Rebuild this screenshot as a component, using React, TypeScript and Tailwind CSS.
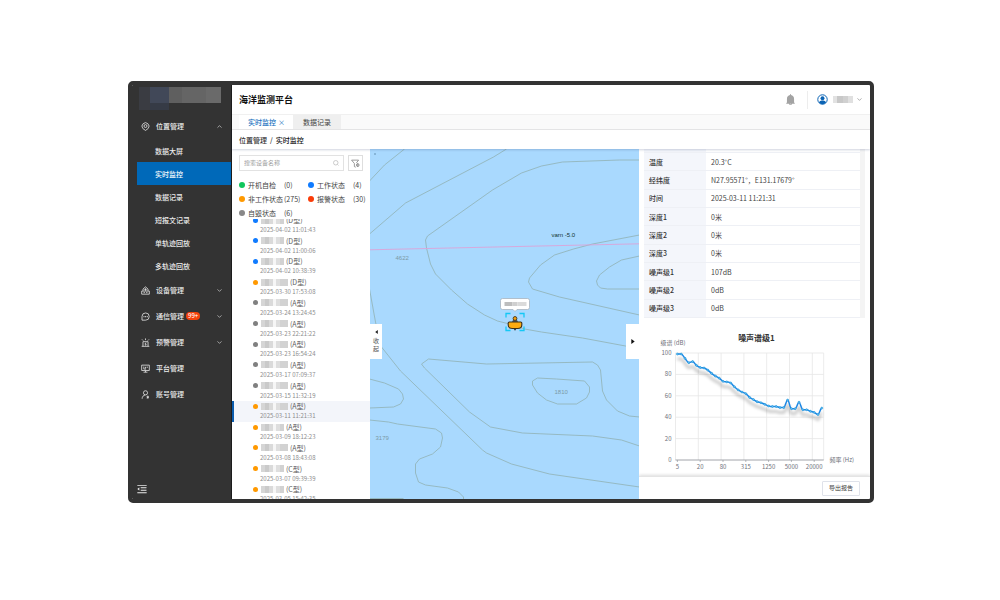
import React from "react";
import { AiFillBell, AiOutlineMenuFold } from "react-icons/ai";
import { ChevronDown, ChevronUp } from "lucide-react";

type IconName = "pin" | "device" | "message" | "alarm" | "monitor" | "account";

function NavIcon({ name }: { name: IconName }) {
  const shapes: Record<IconName, React.ReactNode> = {
    pin: (
      <>
        <path d="M8 15 3.200 11.500A6.200 6.200 0 1 1 12.800 11.500Z" />
        <circle cx="8" cy="7.200" r="2.600" />
      </>
    ),
    device: (
      <>
        <path d="M3.500 8.500V5.500L8 1.500l4.500 4v3" />
        <path d="M1.200 14.500V9h13.600v5.500Z" />
        <path d="M4.500 11.800h2.500M9 11.800h2.500M6 6.200h4M8 4v4.500" />
      </>
    ),
    message: (
      <>
        <path d="M1.800 14.500V8a6.400 6.400 0 1 1 6.400 6.500Z" />
        <path d="M4.500 8.200h1.600M7.400 8.200H9M10.300 8.200h1.600" strokeWidth="1.900" />
      </>
    ),
    alarm: (
      <>
        <path d="M1.200 14.800h13.600M3.500 14.800V6.500h9v8.300" />
        <path d="M8 .8v3M1.800 2.500l2 2M14.200 2.500l-2 2M8.800 8 7 11h2.200L8 13.500" />
      </>
    ),
    monitor: (
      <>
        <path d="M1.200 2h13.600v9.500H1.200ZM4.500 14.500h7M8 11.500v3" />
        <path d="M5 4.500v4.500h4M8 5v3M11 4.500V7" />
      </>
    ),
    account: (
      <>
        <circle cx="8" cy="5" r="3.700" />
        <path d="M2 15.500c0-3.800 2.500-6.300 5.500-6.500M12 10v5.500M10 11.500l4 2.500M14 11.500 10 14" />
      </>
    ),
  };
  return (
    <svg viewBox="0 0 16 16" className="h-[9px] w-[9px] shrink-0" fill="none" stroke="#dedede" strokeWidth="1.500">
      {shapes[name]}
    </svg>
  );
}

const subItems = ["数据大屏", "实时监控", "数据记录", "短报文记录", "单轨迹回放", "多轨迹回放"];

const groups: { label: string; icon: IconName; badge?: string; arrow?: boolean }[] = [
  { label: "设备管理", icon: "device", arrow: true },
  { label: "通信管理", icon: "message", badge: "99+", arrow: true },
  { label: "预警管理", icon: "alarm", arrow: true },
  { label: "平台管理", icon: "monitor" },
  { label: "账号管理", icon: "account" },
];

function Sidebar() {
  return (
    <aside className="flex w-[100px] shrink-0 flex-col border-r border-[#1c1c1c] bg-[#333333] text-[7px] leading-[10px] font-medium text-[#ececec]">
      <div className="mt-[2px] ml-[7px] flex h-[23px] w-[82px]">
        <div className="w-[11px] bg-[#3a3c42]" />
        <div className="w-[19px]">
          <div className="h-[16px] bg-[#414858]" />
          <div className="h-[7px] bg-[#363b46]" />
        </div>
        <div className="h-[16px] w-[13px] bg-[#5f5f5f]" />
        <div className="h-[16px] w-[24px] bg-[#656565]" />
        <div className="h-[16px] flex-1 bg-[#6a6a6a]" />
      </div>
      <nav className="mt-[3px] flex flex-col">
        <button className="flex h-[26px] items-center pr-[8px] pl-[9px]">
          <NavIcon name="pin" />
          <span className="ml-[6px]">位置管理</span>
          <ChevronUp className="ml-auto h-[7px] w-[7px]" strokeWidth={2} />
        </button>
        {subItems.map((s, i) => (
          <a
            key={s}
            href="#"
            className={
              i === 1
                ? "ml-[5px] flex h-[23px] items-center bg-[#0069b9] pl-[18px] text-white"
                : "ml-[5px] flex h-[23px] items-center pl-[18px]"
            }
          >
            {s}
          </a>
        ))}
        {groups.map((g) => (
          <button key={g.label} className="flex h-[26px] items-center pr-[8px] pl-[9px]">
            <NavIcon name={g.icon} />
            <span className="ml-[6px]">{g.label}</span>
            {g.badge && (
              <span className="ml-[2px] rounded-full bg-[#f5430b] px-[2px] text-[6px] leading-[8px] text-white">
                {g.badge}
              </span>
            )}
            {g.arrow && <ChevronDown className="ml-auto h-[7px] w-[7px]" strokeWidth={2} />}
          </button>
        ))}
      </nav>
      <button aria-label="收起菜单" className="mt-auto mb-[4px] ml-[4px] h-[12px] w-[12px]">
        <AiOutlineMenuFold className="h-[12px] w-[12px]" />
      </button>
    </aside>
  );
}

function Header() {
  return (
    <header className="flex h-[30px] shrink-0 items-center border-b border-[#f0f0f0] pr-[7px] pl-[7px]">
      <h1 className="text-[9px] leading-[12px] font-bold text-[#111111]">海洋监测平台</h1>
      <button aria-label="通知" className="ml-auto">
        <AiFillBell className="h-[13px] w-[13px] text-[#a3a3a3]" />
      </button>
      <div className="ml-[10px] h-[18px] w-px bg-[#ededed]" />
      <button aria-label="账户" className="ml-[9px] flex items-center">
        <svg viewBox="0 0 20 20" className="h-[11px] w-[11px]">
          <circle cx="10" cy="10" r="8.600" fill="#fff" stroke="#0a63b4" strokeWidth="1.800" />
          <circle cx="10" cy="7.800" r="3.600" fill="#0a63b4" />
          <path d="M3.500 15.500c1.200-3 3.500-3.800 6.500-3.800s5.300.8 6.500 3.800A8.600 8.600 0 0 1 3.500 15.500Z" fill="#0a63b4" />
        </svg>
        <span className="ml-[5px] flex h-[7px] w-[20px]">
          <span className="w-[4px] bg-[#e2e2e2]" />
          <span className="w-[6px] bg-[#c8c8c8]" />
          <span className="w-[5px] bg-[#d0d0d0]" />
          <span className="w-[5px] bg-[#e0e0e0]" />
        </span>
        <ChevronDown className="ml-[3px] h-[7px] w-[7px] text-[#777777]" strokeWidth={2} />
      </button>
    </header>
  );
}

function Tabs() {
  return (
    <div className="flex h-[15px] shrink-0 border-b border-[#e8e8e8] bg-[#fafafa] pl-[7px] text-[7px] leading-[14px]">
      <button className="flex items-center bg-white pr-[8px] pl-[9px] font-medium text-[#1470bd]">
        实时监控
        <span className="ml-[2px] font-normal">×</span>
      </button>
      <button className="bg-[#efefef] px-[10px] text-[#444444]">数据记录</button>
    </div>
  );
}

const statuses = [
  { name: "开机自检", count: "(0)", dot: "bg-[#10c65c]" },
  { name: "工作状态", count: "(4)", dot: "bg-[#0f7bff]" },
  { name: "非工作状态", count: "(275)", dot: "bg-[#ff9900]" },
  { name: "报警状态", count: "(30)", dot: "bg-[#fa3c08]" },
  { name: "自毁状态", count: "(6)", dot: "bg-[#888888]" },
];

const BLUE = "bg-[#0f7bff]";
const ORANGE = "bg-[#ff9900]";
const GRAY = "bg-[#808080]";

const devices = [
  { type: "(D型)", time: "2025-04-02 11:01:43", dot: BLUE, short: true },
  { type: "(D型)", time: "2025-04-02 11:00:06", dot: BLUE, short: true },
  { type: "(D型)", time: "2025-04-02 10:38:39", dot: BLUE, short: true },
  { type: "(D型)", time: "2025-03-30 17:53:08", dot: ORANGE },
  { type: "(A型)", time: "2025-03-24 13:24:45", dot: GRAY },
  { type: "(A型)", time: "2025-03-23 22:21:22", dot: GRAY },
  { type: "(A型)", time: "2025-03-23 16:54:24", dot: GRAY },
  { type: "(A型)", time: "2025-03-17 07:09:37", dot: GRAY },
  { type: "(A型)", time: "2025-03-15 11:32:19", dot: GRAY },
  { type: "(A型)", time: "2025-03-11 11:21:31", dot: ORANGE, active: true },
  { type: "(A型)", time: "2025-03-09 18:12:23", dot: ORANGE, short: true },
  { type: "(A型)", time: "2025-03-08 18:43:08", dot: ORANGE },
  { type: "(C型)", time: "2025-03-07 09:39:39", dot: ORANGE, short: true },
  { type: "(C型)", time: "2025-03-05 15:42:35", dot: ORANGE, short: true },
];

function Redacted({ short }: { short?: boolean }) {
  return (
    <span className={short ? "flex h-[7px] w-[23px]" : "flex h-[7px] w-[27px]"}>
      <span className="w-[4px] bg-[#d6d6d6]" />
      <span className="w-[4px] bg-[#cacaca]" />
      <span className="w-[4px] bg-[#dadada]" />
      <span className="w-[3px] bg-[#f6f6f6]" />
      <span className="w-[4px] bg-[#dedede]" />
      <span className="flex-1 bg-[#d2d2d2]" />
    </span>
  );
}

function DeviceList() {
  return (
    <section className="flex w-[138px] shrink-0 flex-col">
      <div className="flex gap-[4px] px-[7px] pt-[6px]">
        <div className="flex h-[16px] flex-1 items-center border border-[#e2e2e2] px-[4px]">
          <input
            aria-label="搜索设备名称"
            placeholder="搜索设备名称"
            className="w-0 min-w-0 flex-1 text-[6px] leading-[10px] outline-none placeholder:text-[#a0a0a0]"
          />
          <svg viewBox="0 0 12 12" className="h-[6px] w-[6px]" fill="none" stroke="#bbbbbb" strokeWidth="1.500">
            <circle cx="5.500" cy="5.500" r="4.500" />
            <path d="m9 9 2 2" />
          </svg>
        </div>
        <button aria-label="筛选" className="flex h-[16px] w-[15px] items-center justify-center border border-[#dedede]">
          <svg viewBox="0 0 16 16" className="h-[9px] w-[9px]" fill="none" stroke="#777777" strokeWidth="1.300">
            <path d="M1 2h12.500L9.500 7M1 2l5 6v5.500l2.500 1" />
            <circle cx="12" cy="10.800" r="2.400" />
            <path d="M12 7.500v6.600" />
          </svg>
        </button>
      </div>
      <ul className="mt-[7px] grid grid-cols-[69px_1fr] pl-[7px] text-[7px] leading-[14px] text-[#444444]">
        {statuses.map((s) => (
          <li key={s.name} className="flex h-[14px] items-center">
            <span className={`h-[6px] w-[6px] rounded-full ${s.dot}`} />
            <span className="ml-[3px] w-[36px] whitespace-nowrap">{s.name}</span>
            <span>{s.count}</span>
          </li>
        ))}
      </ul>
      <div className="-mt-px min-h-0 flex-1 overflow-hidden bg-white">
        <ul className="-mt-[4px] grid h-[290px] auto-rows-fr">
          {devices.map((d) => (
            <li
              key={d.time}
              className={
                d.active
                  ? "flex min-h-0 flex-col border-l-2 border-[#0b5cad] bg-[#f3f5fa] pl-[19px]"
                  : "flex min-h-0 flex-col border-l-2 border-transparent pl-[19px]"
              }
            >
              <div className="flex h-[10px] items-center text-[7px] leading-[10px] text-[#5c5c5c]">
                <span className={`mr-[3px] h-[5px] w-[5px] rounded-full ${d.dot}`} />
                <Redacted short={d.short} />
                <span className="ml-[2px]">{d.type}</span>
              </div>
              <time className="pl-[7px] text-[6px] leading-[10px] text-[#8c8c8c]">{d.time}</time>
            </li>
          ))}
        </ul>
      </div>
    </section>
  );
}

const contours = [
  "35,0 15,16 0,32",
  "137,0 124,8 36,54 0,85",
  "270,11 250,11 193,13 172,17 152,24 123,41 58,87 56,91 57,99 61,115 66,125 82,141 98,155 115,166 128,172 140,175 155,180 172,183 213,189 256,197 270,199",
  "270,86 223,95 204,100 185,106 171,116 160,129 159,133 163,140 190,148 270,166",
  "270,107 252,111 240,118 230,126 227,132 228,136 231,139 238,140 270,140",
  "0,140 6,173 12,198 31,222 113,301 117,304 142,315 180,325 270,338",
  "0,230 15,234 29,240 33,245 34,250 31,255 24,258 0,259",
  "0,271 19,273 28,275 66,280 72,284 73,289 71,298 63,305 50,310 46,315 46,324 49,333 56,336 78,339 89,343 94,348 94,350",
  "0,349.500 34,349.500",
  "270,297 252,291 223,287 153,284 121,278 100,263 55,219 52,215 59,210 117,215 223,213 228,216 231,221 233,242 237,251 248,262 260,267 270,268",
  "168,229 187,230 215,232 220,238 220,243 217,249 207,255 188,255 177,251 168,244 163,236 163,232 168,229",
];

function SeaMap() {
  return (
    <section className="relative min-w-0 flex-1 overflow-hidden bg-[#a9d9fe]">
      <svg viewBox="0 0 270 350" preserveAspectRatio="xMidYMid slice" className="absolute inset-0 h-full w-full">
        <g fill="none" stroke="#93b5bb" strokeWidth="0.900">
          {contours.map((c) => (
            <polyline key={c} points={c} />
          ))}
        </g>
        <path d="M0 100.800 270 94.800" stroke="#dba4d8" strokeWidth="0.900" />
        <circle cx="5.500" cy="5" r="0.800" fill="#5a87a8" />
        <g fontFamily="Liberation Sans" fontSize="6">
          <text x="182" y="88" fill="#12352f">varn -5.0</text>
          <g fill="#7c9aa6">
            <text x="26" y="111">4622</text>
            <text x="185" y="245">1810</text>
            <text x="6" y="291">3179</text>
          </g>
        </g>
        <path
          d="M133 149.500h25a2 2 0 0 1 2 2v7a2 2 0 0 1-2 2h-10.500l-2 2-2-2H133a2 2 0 0 1-2-2v-7a2 2 0 0 1 2-2Z"
          fill="#ffffff"
          stroke="#a8b4bf"
          strokeWidth="0.800"
        />
        <path d="M135 153h8v4h-8Z" fill="#bdbdbd" />
        <path d="M143 153h5v4h-5Z" fill="#cfcfcf" />
        <path d="M148 153h9v4h-9Z" fill="#dadada" />
        <path
          d="M136.500 168.500v-4h4.500M150 164.500h4.500v4M154.500 177.500v4H150M141 181.500h-4.500v-4"
          fill="none"
          stroke="#14c8f5"
          strokeWidth="1.300"
        />
        <path d="m145.500 167-3 6h6Z" fill="#4b5360" />
        <circle cx="145.500" cy="169.500" r="1.900" fill="#f9a20d" stroke="#3c3524" strokeWidth="0.900" />
        <path d="M143.500 179h4l-2 2.800Z" fill="#333333" />
        <path
          d="M139.800 173h11.400c.7 0 1.100.400 1.100 1v2c0 2-1.600 3.500-4.100 3.500h-5.400c-2.500 0-4.100-1.500-4.100-3.500v-2c0-.6.400-1 1.100-1Z"
          fill="#fdab12"
          stroke="#3c3018"
          strokeWidth="1.100"
        />
      </svg>
      <button className="absolute top-1/2 left-0 flex h-[35px] w-[12px] flex-col items-center justify-center bg-white text-[6px] leading-[8px] text-[#555555]">
        <svg viewBox="0 0 4 6" className="mb-[3px] h-[4px] w-[3px]">
          <path d="M4 0v6L0 3Z" fill="#222222" />
        </svg>
        <span>收</span>
        <span>起</span>
      </button>
      <button aria-label="展开" className="absolute top-1/2 right-0 flex h-[35px] w-[13px] items-center justify-center bg-white">
        <svg viewBox="0 0 4 6" className="h-[5px] w-[4px]">
          <path d="M0 0v6l4-3Z" fill="#111111" />
        </svg>
      </button>
    </section>
  );
}

const readings = [
  ["温度", "20.3°C"],
  ["经纬度", "N27.95571°，E131.17679°"],
  ["时间", "2025-03-11 11:21:31"],
  ["深度1", "0米"],
  ["深度2", "0米"],
  ["深度3", "0米"],
  ["噪声级1", "107dB"],
  ["噪声级2", "0dB"],
  ["噪声级3", "0dB"],
];

const levels = [
  99, 99, 95, 91, 92, 88.5, 86.5, 86, 84, 81, 78.5, 76.5, 73.5, 73, 72, 68.5, 65.5, 63.5, 62, 58.5, 56.5, 54.5, 53.5,
  52, 50.5, 50, 50, 49, 49, 56, 48, 48, 54, 47, 47, 45.5, 44.5, 42.5, 48.5,
];
const bands = ["5", "20", "80", "315", "1250", "5000", "20000"];
const LEFT = 36;
const STEP = 3.8;
const TOP = 35;
const BASE = 142;
const RIGHT = LEFT + STEP * levels.length;

const points = levels.map((v, i) => ({
  x: LEFT + STEP * (i + 0.5),
  y: BASE - (v / 100) * (BASE - TOP),
}));

function smoothPath() {
  const slope = points.map((p, i) => {
    const a = points[i - 1];
    const b = points[i + 1];
    if (!a || !b || (p.y - a.y) * (b.y - p.y) <= 0) return 0;
    return (b.y - a.y) / 2;
  });
  return points
    .map((p, i) => {
      if (i === 0) return `M${p.x} ${p.y}`;
      const a = points[i - 1];
      return `C${a.x + STEP / 3} ${a.y + slope[i - 1] / 3} ${p.x - STEP / 3} ${p.y - slope[i] / 3} ${p.x} ${p.y}`;
    })
    .join("");
}

function NoiseChart() {
  const line = smoothPath();
  return (
    <svg viewBox="0 0 230 158" className="min-h-0 w-full flex-1" fontFamily="'Noto Sans CJK SC', sans-serif">
      <defs>
        <filter id="line-shadow" x="-10%" y="-10%" width="120%" height="140%">
          <feGaussianBlur stdDeviation="1.800" />
        </filter>
      </defs>
      <text x="117" y="23" fontSize="8" fontWeight="700" textAnchor="middle" fill="#333333">
        噪声谱级1
      </text>
      <g fontSize="6" fill="#6e7079">
        <text x="21" y="27">级谱 (dB)</text>
        <text x="190" y="144">频率 (Hz)</text>
        {[0, 20, 40, 60, 80, 100].map((v) => (
          <text key={v} x="32" y={BASE + 2 - (v / 100) * (BASE - TOP)} textAnchor="end">
            {v}
          </text>
        ))}
        {bands.map((b, i) => (
          <text key={b} x={LEFT + STEP * (i * 6 + 0.5)} y="151" textAnchor="middle">
            {b}
          </text>
        ))}
      </g>
      <g stroke="#e6e6e6" strokeWidth="0.800">
        {[20, 40, 60, 80, 100].map((v) => {
          const y = BASE - (v / 100) * (BASE - TOP);
          return <path key={v} d={`M${LEFT} ${y}H${RIGHT}`} />;
        })}
        {bands.map((b, i) => (
          <path key={b} d={`M${LEFT + STEP * i * 6} ${TOP}V${BASE}`} />
        ))}
        <path d={`M${RIGHT} ${TOP}V${BASE}`} />
      </g>
      <path d={`M${LEFT} ${BASE}H${RIGHT}`} stroke="#8a8d96" strokeWidth="0.800" />
      {bands.map((b, i) => (
        <path key={b} d={`M${LEFT + STEP * (i * 6 + 0.5)} ${BASE}v2`} stroke="#8a8d96" strokeWidth="0.600" />
      ))}
      <path
        d={line}
        fill="none"
        stroke="#000000"
        strokeOpacity="0.200"
        strokeWidth="3"
        transform="translate(0 5)"
        filter="url(#line-shadow)"
      />
      <path d={line} fill="none" stroke="#1c87e5" strokeWidth="1.500" />
      {points.map((p) => (
        <circle key={p.x} cx={p.x} cy={p.y} r="1" fill="#6cc4ee" stroke="#1f93dc" strokeWidth="0.600" />
      ))}
    </svg>
  );
}

function DetailPanel() {
  return (
    <section className="flex w-[231px] shrink-0 flex-col">
      <div className="flex shrink-0 pr-[5px] pl-[5px]">
        <div className="flex-1">
          <div className="flex h-[3px]">
            <div className="w-[62px] bg-[#f4f6fb]" />
          </div>
          <table className="h-[166px] w-full border-collapse text-[7px] leading-[10px] text-[#444444]">
            <tbody>
              {readings.map(([k, v]) => (
                <tr key={k} className="border-y border-[#eef0f5]">
                  <th scope="row" className="w-[62px] bg-[#f4f6fb] p-0 pl-[5px] text-left font-medium text-[#333333]">
                    {k}
                  </th>
                  <td className="p-0 pl-[5px]">{v}</td>
                </tr>
              ))}
            </tbody>
          </table>
        </div>
        <div className="w-[5px] bg-[#f4f4f4]" />
      </div>
      <NoiseChart />
      <div className="flex h-[23px] shrink-0 items-center justify-end border-t border-[#e4e4e4] pr-[10px] shadow-[0_-1px_3px_rgba(0,0,0,0.14)]">
        <button className="h-[15px] rounded-[1px] border border-[#dfe2ea] px-[6px] text-[6px] leading-[12px] text-[#444444]">
          导出报告
        </button>
      </div>
    </section>
  );
}

export default function App() {
  return (
    <div
      lang="zh-CN"
      className="flex h-screen min-h-[480px] bg-white pt-[81px] pr-[126px] pb-[97px] pl-[128px] font-['Noto_Sans_CJK_SC',sans-serif]"
    >
      <div className="flex min-w-0 flex-1 overflow-hidden rounded-[5px] border-4 border-[#333333] bg-white">
        <Sidebar />
        <main className="flex min-w-0 flex-1 flex-col">
          <Header />
          <Tabs />
          <div className="relative z-10 flex h-[19px] shrink-0 items-center bg-white pl-[7px] text-[7px] leading-[10px] font-medium text-[#333333] shadow-[0_1px_2px_rgba(40,60,110,0.22)]">
            <nav aria-label="面包屑">
              位置管理<span className="px-[3px]">/</span>
              <span className="text-[#111111]">实时监控</span>
            </nav>
          </div>
          <div className="flex min-h-0 flex-1">
            <DeviceList />
            <SeaMap />
            <DetailPanel />
          </div>
        </main>
      </div>
    </div>
  );
}
